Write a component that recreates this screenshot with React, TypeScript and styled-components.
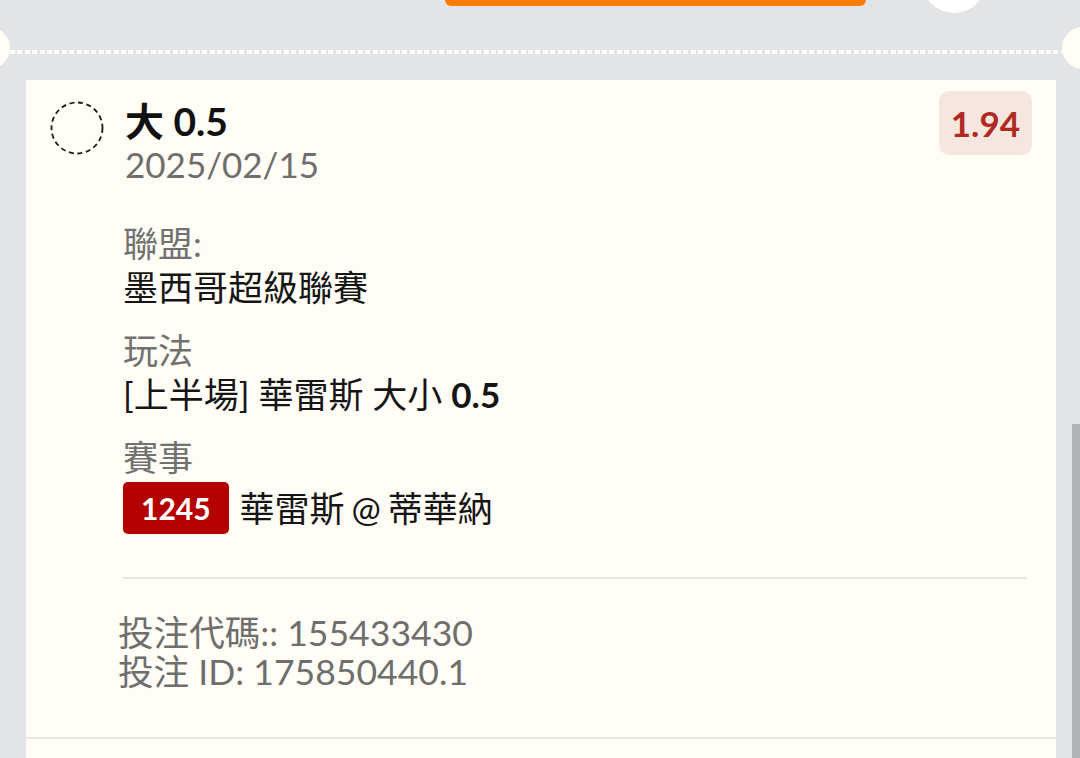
import React from "react";
import styled, { createGlobalStyle } from "styled-components";

const Global = createGlobalStyle`
  html, body { margin: 0; padding: 0; background: #e3e4e6; overflow: hidden; }
  body { font-family: Lato, "Noto Sans CJK TC", "Noto Sans", sans-serif; }
`;

const Page = styled.div`
  position: relative;
  width: 1080px;
  height: 758px;
  overflow: hidden;
  background: #e3e4e6;
  display: flex;
  flex-direction: column;
`;

const TopStrip = styled.div`
  display: flex;
  align-items: flex-start;
  height: 26px;
  flex-shrink: 0;
`;

const OrangeTab = styled.div`
  margin-left: 445px;
  width: 421px;
  height: 6px;
  background: #ff7c00;
  border-radius: 0 0 7px 7px;
`;

const WhiteDot = styled.div`
  margin-left: 56px;
  margin-top: -51px;
  width: 64px;
  height: 64px;
  border-radius: 50%;
  background: #ffffff;
`;

const Perforation = styled.div`
  display: flex;
  align-items: flex-start;
  height: 54px;
  flex-shrink: 0;
`;

const Notch = styled.div<{ $side: "left" | "right" }>`
  width: 42px;
  height: 42px;
  border-radius: 50%;
  background: #fffdf6;
  flex-shrink: 0;
  margin-top: 1px;
  ${(p) => (p.$side === "left" ? "margin-left: -32px;" : "margin-right: -24px;")}
`;

const Dashes = styled.div`
  flex: 1;
  height: 4px;
  margin-top: 24px;
  background: repeating-linear-gradient(
    90deg,
    #fdfcf7 0 5px,
    transparent 5px 7.4px
  );
`;

const Card = styled.div`
  margin: 0 24px 0 26px;
  background: #fffdf6;
  flex: 1;
  display: flex;
  flex-direction: column;
`;

const Header = styled.div`
  display: flex;
  align-items: flex-start;
  padding: 11px 24px 0 24px;
`;

const Radio = styled.svg`
  width: 54px;
  height: 54px;
  margin-top: 10px;
  flex-shrink: 0;
`;

const TitleBlock = styled.div`
  flex: 1;
  margin-left: 21px;
  margin-top: 8px;
  display: flex;
  flex-direction: column;
`;

const Title = styled.div`
  font-size: 39px;
  font-weight: 700;
  line-height: 44px;
  color: #111111;
`;

const DateText = styled.div`
  font-size: 35px;
  line-height: 42px;
  color: #6e6e6c;
`;

const OddsBadge = styled.div`
  height: 64px;
  padding: 0 12px;
  border-radius: 10px;
  background: #f6e6df;
  color: #b02a22;
  font-size: 35px;
  font-weight: 700;
  display: flex;
  align-items: center;
`;

const Details = styled.div`
  display: flex;
  flex-direction: column;
  gap: 20px;
  padding: 37px 29px 0 97px;
`;

const Field = styled.div`
  display: flex;
  flex-direction: column;
`;

const Label = styled.div`
  font-size: 35px;
  line-height: 43px;
  color: #717170;
`;

const Value = styled.div`
  font-size: 35px;
  line-height: 44px;
  color: #151515;
`;

const Strong = styled.span`
  font-weight: 700;
`;

const MatchRow = styled.div`
  display: flex;
  align-items: center;
  gap: 11px;
  margin-top: 3px;
`;

const TeamsText = styled(Value)`
  word-spacing: -2px;
`;

const MatchBadge = styled.div`
  height: 52px;
  padding: 0 18px;
  border-radius: 5px;
  background: #b50000;
  color: #ffffff;
  font-size: 30px;
  font-weight: 700;
  display: flex;
  align-items: center;
`;

const Divider = styled.div`
  height: 2px;
  background: #e7e5df;
  flex-shrink: 0;
`;

const InnerDivider = styled(Divider)`
  margin: 43px 29px 0 97px;
`;

const Footer = styled.div`
  padding: 34px 0 46px 92px;
  display: flex;
  flex-direction: column;
`;

const FooterLine = styled.div`
  font-size: 35.6px;
  line-height: 39px;
  color: #6e6e6c;
`;

const Scrollbar = styled.div`
  position: absolute;
  left: 1072px;
  top: 424px;
  width: 8px;
  bottom: 0;
  background: #b1b2b4;
`;

export default function App() {
  return (
    <Page>
      <Global />
      <TopStrip>
        <OrangeTab />
        <WhiteDot />
      </TopStrip>
      <Perforation>
        <Notch $side="left" />
        <Dashes />
        <Notch $side="right" />
      </Perforation>
      <Card>
        <Header>
          <Radio viewBox="0 0 54 54">
            <circle
              cx="27"
              cy="27"
              r="25.5"
              fill="none"
              stroke="#1a1a1a"
              strokeWidth="1.8"
              strokeDasharray="5 3.6"
            />
          </Radio>
          <TitleBlock>
            <Title>大 0.5</Title>
            <DateText>2025/02/15</DateText>
          </TitleBlock>
          <OddsBadge>1.94</OddsBadge>
        </Header>
        <Details>
          <Field>
            <Label>聯盟:</Label>
            <Value>墨西哥超級聯賽</Value>
          </Field>
          <Field>
            <Label>玩法</Label>
            <Value>
              [上半場] 華雷斯 大小 <Strong>0.5</Strong>
            </Value>
          </Field>
          <Field>
            <Label>賽事</Label>
            <MatchRow>
              <MatchBadge>1245</MatchBadge>
              <TeamsText>華雷斯 @ 蒂華納</TeamsText>
            </MatchRow>
          </Field>
        </Details>
        <InnerDivider />
        <Footer>
          <FooterLine>投注代碼:: 155433430</FooterLine>
          <FooterLine>投注 ID: 175850440.1</FooterLine>
        </Footer>
        <Divider />
      </Card>
      <Scrollbar />
    </Page>
  );
}
